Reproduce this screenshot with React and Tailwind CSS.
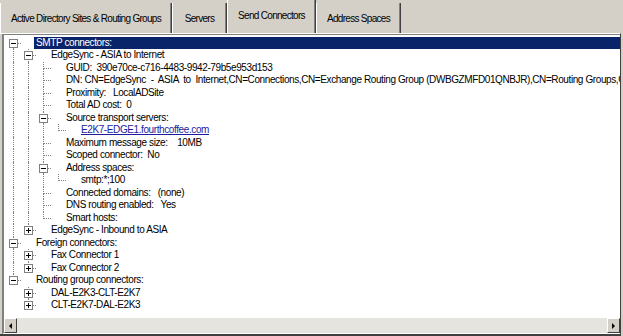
const tree = [
  {
    t: 'SMTP connectors:',
    sel: true,
    open: true,
    c: [
      {
        t: 'EdgeSync - ASIA to Internet',
        open: true,
        c: [
          { t: 'GUID:  390e70ce-c716-4483-9942-79b5e953d153' },
          {
            t: 'DN: CN=EdgeSync  -  ASIA  to  Internet,CN=Connections,CN=Exchange Routing Group (DWBGZMFD01QNBJR),CN=Routing Groups,CN=Exchange Administrative Group',
          },
          { t: 'Proximity:   LocalADSite' },
          { t: 'Total AD cost:  0' },
          {
            t: 'Source transport servers:',
            open: true,
            c: [{ t: 'E2K7-EDGE1.fourthcoffee.com', link: true }],
          },
          { t: 'Maximum message size:    10MB' },
          { t: 'Scoped connector:  No' },
          { t: 'Address spaces:', open: true, c: [{ t: 'smtp:*;100' }] },
          { t: 'Connected domains:   (none)' },
          { t: 'DNS routing enabled:   Yes' },
          { t: 'Smart hosts:' },
        ],
      },
      { t: 'EdgeSync - Inbound to ASIA', plus: true },
    ],
  },
  {
    t: 'Foreign connectors:',
    open: true,
    c: [
      { t: 'Fax Connector 1', plus: true },
      { t: 'Fax Connector 2', plus: true },
    ],
  },
  {
    t: 'Routing group connectors:',
    open: true,
    c: [
      { t: 'DAL-E2K3-CLT-E2K7', plus: true },
      { t: 'CLT-E2K7-DAL-E2K3', plus: true },
    ],
  },
];

function flatten(nodes, depth, lines, out) {
  nodes.forEach((n, i) => {
    const last = i === nodes.length - 1;
    out.push({ ...n, depth, lines, last, first: depth === 0 && i === 0 });
    if (n.c && n.open) flatten(n.c, depth + 1, [...lines, !last], out);
  });
  return out;
}

const rows = flatten(tree, 0, [], []);

function Box({ plus }) {
  return (
    <span className="absolute left-[3px] top-[2px] flex h-[9px] w-[9px] items-center justify-center border border-[#808080] bg-white">
      <span className="absolute h-px w-[5px] bg-black"></span>
      {plus && <span className="absolute h-[5px] w-px bg-black"></span>}
    </span>
  );
}

function Row({ r }) {
  const hasBox = r.c || r.plus;
  return (
    <div className="flex h-[12.5px] shrink-0 items-stretch whitespace-pre pl-[2px]">
      {r.lines.map((on, k) => (
        <div key={k} className="relative w-[15px] shrink-0">
          {on && <span className="absolute left-[7px] top-0 bottom-0 border-l border-dotted border-[#808080]"></span>}
        </div>
      ))}
      <div className="relative w-[15px] shrink-0">
        {!r.first && <span className="absolute left-[7px] top-0 h-[7px] border-l border-dotted border-[#808080]"></span>}
        {!r.last && <span className="absolute left-[7px] top-[6px] bottom-0 border-l border-dotted border-[#808080]"></span>}
        <span className="absolute left-[7px] right-0 top-[6px] border-t border-dotted border-[#808080]"></span>
        {hasBox && <Box plus={r.plus} />}
      </div>
      <div className="w-[13px] shrink-0"></div>
      <span
        className={
          r.sel
            ? 'flex-1 bg-[#0a246a] px-[2px] leading-[12.5px] text-white'
            : r.link
              ? 'px-[2px] leading-[12.5px] text-[#1c1ca0] underline'
              : 'px-[2px] leading-[12.5px]'
        }
      >
        {r.t}
      </span>
    </div>
  );
}

function Tab({ label, w, active }) {
  return (
    <div
      className={
        active
          ? 'flex h-[33px] shrink-0 items-center justify-center border-l border-l-white border-r border-r-[#404040] pb-[3px] shadow-[inset_-1px_0_0_#808080]'
          : 'flex h-[30px] shrink-0 items-center justify-center border-l border-l-white border-r border-r-[#404040] pt-[1px] shadow-[inset_-1px_0_0_#808080]'
      }
      style={{ width: w }}
    >
      {label}
    </div>
  );
}

export default function App() {
  return (
    <div className="flex h-[336px] w-[623px] flex-col overflow-hidden bg-[#d4d0c8] font-['Liberation_Sans',Arial,sans-serif] text-[10px] text-black">
      {/* Tabs */}
      <div className="flex h-[33px] shrink-0 items-end tracking-[-0.7px]">
        <Tab label="Active Directory Sites & Routing Groups" w={172} />
        <Tab label="Servers" w={55} />
        <Tab label="Send Connectors" w={89} active />
        <Tab label="Address Spaces" w={85} />
      </div>

      {/* Panel */}
      <div className="flex min-h-0 w-[621px] flex-1 flex-col border-t border-t-white border-r border-r-[#404040] border-b-2 border-b-[#404040] pl-[2px]">
        <div className="flex min-h-0 flex-1 flex-col border-t border-l-2 border-[#808080] border-b border-b-white bg-white">
          <div className="flex min-h-0 flex-1 flex-col overflow-hidden pt-[1.5px] tracking-[-0.4px]">
            {rows.map((r, i) => (
              <Row key={i} r={r} />
            ))}
          </div>

          {/* Horizontal scrollbar */}
          <div className="flex h-[15px] shrink-0 bg-[#e6e4df]">
            <div className="flex w-[13px] items-center justify-center border-t border-l border-t-white border-l-white border-r border-b border-r-[#404040] border-b-[#404040] bg-[#d4d0c8]">
              <span className="h-0 w-0 border-y-[3px] border-r-[3px] border-y-transparent border-r-black"></span>
            </div>
            <div className="flex-1"></div>
            <div className="flex w-[13px] items-center justify-center border-t border-l border-t-white border-l-white border-r border-b border-r-[#404040] border-b-[#404040] bg-[#d4d0c8]">
              <span className="h-0 w-0 border-y-[3px] border-l-[3px] border-y-transparent border-l-black"></span>
            </div>
          </div>
        </div>
      </div>
    </div>
  );
}
